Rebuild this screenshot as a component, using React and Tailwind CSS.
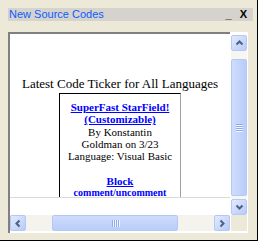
import React from 'react';

const Chevron = ({ dir }) => {
  const paths = {
    up: 'M1.5 5.5 L4.5 2.5 L7.5 5.5',
    down: 'M1.5 2.5 L4.5 5.5 L7.5 2.5',
    left: 'M5.5 1.5 L2.5 4.5 L5.5 7.5',
    right: 'M2.5 1.5 L5.5 4.5 L2.5 7.5',
  };
  return (
    <svg width="9" height="9" viewBox="0 0 9 9">
      <path d={paths[dir]} fill="none" stroke="#4d6185" strokeWidth="2" />
    </svg>
  );
};

const ScrollButton = ({ dir }) => (
  <div className="w-[16px] h-[16px] flex items-center justify-center rounded-[2px] border border-[#b4c8f5] bg-gradient-to-br from-[#e2eafe] to-[#b8cbf7]">
    <Chevron dir={dir} />
  </div>
);

const Grip = ({ vertical }) => (
  <div className={vertical ? 'flex flex-col gap-[1px]' : 'flex gap-[1px]'}>
    {[0, 1, 2, 3].map((i) => (
      <div key={i} className={vertical ? 'w-[7px] h-[1px] bg-[#8cabf0] shadow-[0_1px_0_#f0f4ff]' : 'w-[1px] h-[7px] bg-[#8cabf0] shadow-[1px_0_0_#f0f4ff]'} />
    ))}
  </div>
);

export default function App() {
  return (
    <div className="w-[259px] h-[243px] bg-white">
      <div className="w-[258px] h-[241px] bg-[#ece9d8] border-r border-b border-black pl-2 pt-2 flex flex-col">
        {/* Title bar */}
        <div className="w-[245px] h-[13px] bg-[#d6d3ce] flex items-center justify-between pl-[1px] pr-[6px]">
          <span className="text-[11px] leading-none text-[#0a5cff] font-['Liberation_Sans',sans-serif]">New Source Codes</span>
          <div className="flex items-end gap-[8px] font-['Liberation_Sans',sans-serif]">
            <span className="text-[11px] font-bold leading-none text-black">_</span>
            <span className="text-[11px] font-bold leading-none text-black">X</span>
          </div>
        </div>

        {/* Frame */}
        <div className="mt-[11px] w-[240px] h-[201px] bg-white border-l-2 border-l-[#808080] flex">
          <div className="w-[220px] flex flex-col">
            <div className="h-[166px] border-t-2 border-t-[#808080] border-b border-b-[#dcdad3] overflow-hidden font-['Liberation_Serif',serif]">
              <div className="pt-[42px] text-center text-[13px] leading-[15px] text-black">
                Latest Code Ticker for All Languages
              </div>
              <div className="mx-auto mt-[2px] w-[122px] border-l border-t border-black border-r border-r-[#a0a0a0] pt-[7px] text-center text-[11px] leading-[12.3px] text-black">
                <div className="font-bold text-[#0000ff] underline">SuperFast StarField!</div>
                <div className="font-bold text-[#0000ff] underline">(Customizable)</div>
                <div>By Konstantin</div>
                <div>Goldman on 3/23</div>
                <div>Language: Visual Basic</div>
                <div className="h-[12.3px]" />
                <div className="font-bold text-[#0000ff] underline">Block</div>
                <div className="font-bold text-[#0000ff] text-[10px]">comment/uncomment</div>
                <div className="h-[20px]" />
              </div>
            </div>
            <div className="h-[17px]" />
            {/* Horizontal scrollbar */}
            <div className="h-[16px] flex bg-[#f4f3ee]">
              <ScrollButton dir="left" />
              <div className="flex-1 flex items-stretch">
                <div className="ml-[26px] w-[126px] flex items-center justify-center rounded-[2px] border border-[#b4c8f5] bg-gradient-to-b from-[#cfdcfd] to-[#b9ccf8]">
                  <Grip />
                </div>
              </div>
              <ScrollButton dir="right" />
            </div>
          </div>

          {/* Vertical scrollbar column */}
          <div className="w-[18px] flex flex-col pt-[3px] pl-[1px]">
            <ScrollButton dir="up" />
            <div className="w-[16px] h-[148px] bg-[#f7f6f1] pt-[8px] pb-[3px] flex flex-col">
              <div className="flex-1 flex items-center justify-center rounded-[2px] border border-[#b4c8f5] bg-gradient-to-r from-[#cfdcfd] to-[#b9ccf8]">
                <Grip vertical />
              </div>
            </div>
            <ScrollButton dir="down" />
            <div className="w-[16px] h-[16px] bg-[#ece9d8]" />
          </div>
        </div>
      </div>
    </div>
  );
}
